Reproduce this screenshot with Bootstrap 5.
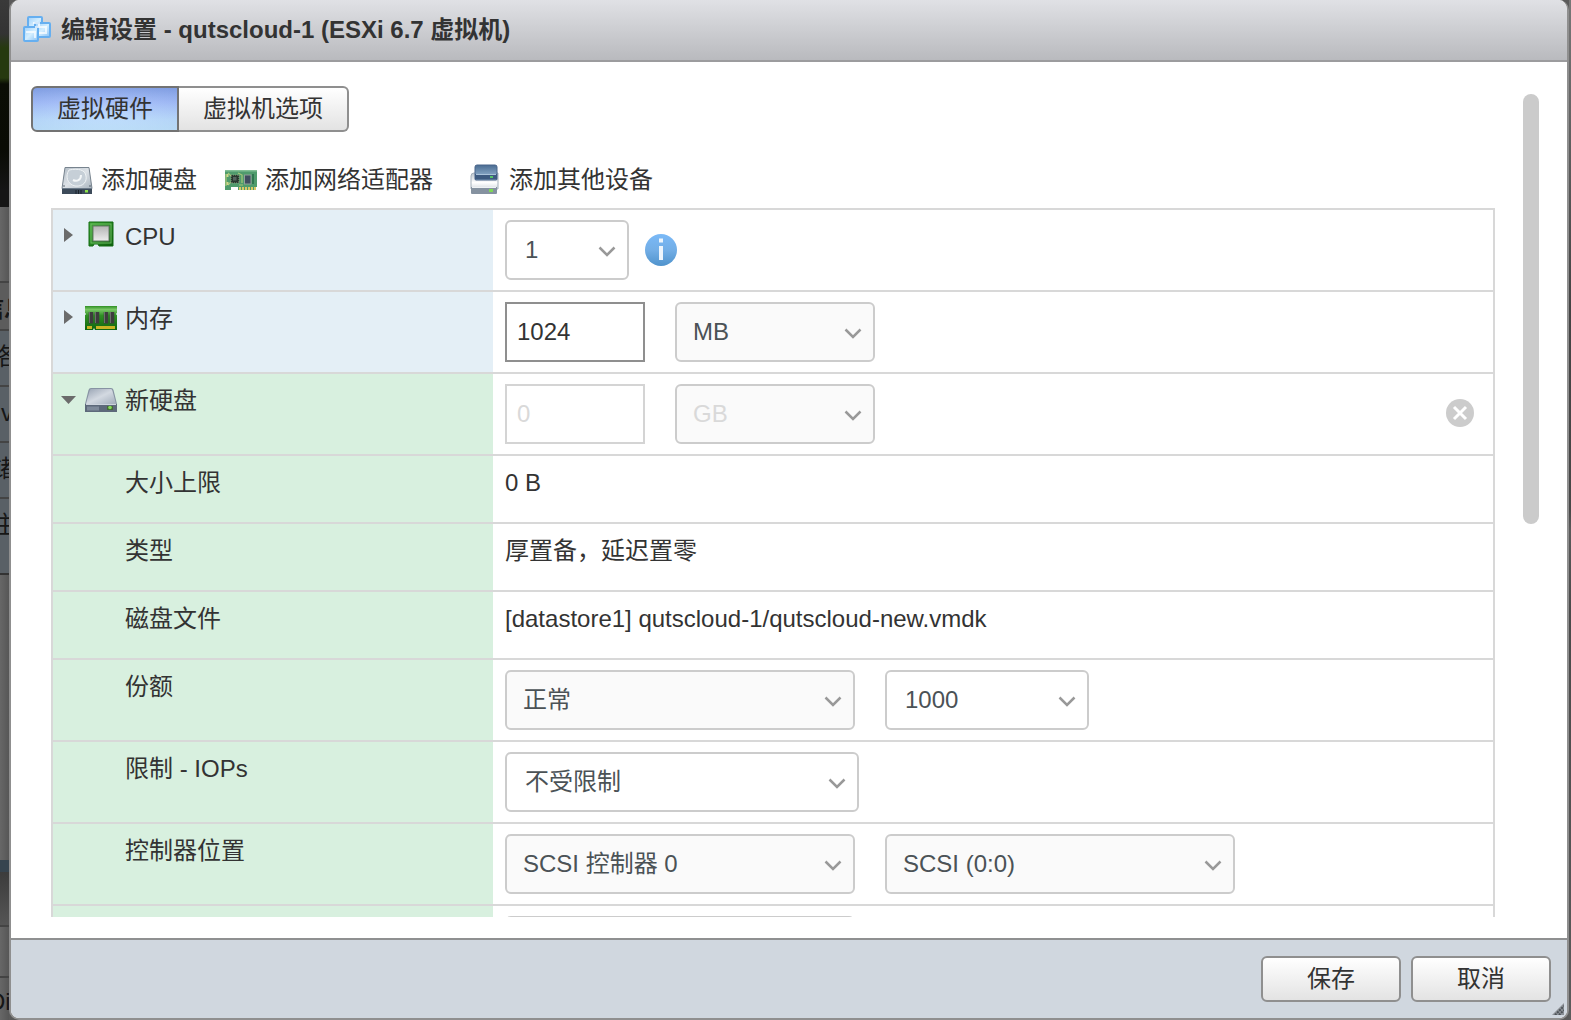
<!DOCTYPE html>
<html lang="zh-CN">
<head>
<meta charset="utf-8">
<meta name="viewport" content="width=device-width, initial-scale=1">
<title>编辑设置 - qutscloud-1 (ESXi 6.7 虚拟机)</title>
<link href="https://cdn.jsdelivr.net/npm/bootstrap@5.3.0/dist/css/bootstrap.min.css" rel="stylesheet">
<style>
  body { font-family: "Liberation Sans", "Noto Sans CJK SC", sans-serif; font-size: 24px; line-height: 32px; color: #333; background: #5a5a5a; }
  svg { display: block; flex: none; }

  /* dimmed page behind the dialog */
  .behind { flex: 0 0 9px; background: linear-gradient(90deg, rgba(0,0,0,0), rgba(0,0,0,.16)), #676767; color: #161616; }
  .behind-edge { flex: 0 0 2px; background: linear-gradient(#777, #444 30%, #484848 50%, #5a5a5a 52%, #4a4a4a 60%, #5c5c5c); }
  .behind-head { flex: 0 0 207px; background: linear-gradient(#3a3a3a 0, #333 34px, #26390f 48px, #26390f 78px, #0a0d05 84px, #090b04 150px, #151515 190px, #151515); }
  .behind-gap { flex: 0 0 74px; }
  .behind-cell { flex: 0 0 56px; padding-top: 10px; border-top: 2px solid #444; background: #596066; }
  .behind-title { flex-basis: 48px; background: #5c5c5c; }
  .behind-last { flex-basis: 78px; border-bottom: 2px solid #333; }
  .behind-blank { flex: 0 0 285px; }
  .behind-bar { flex: 0 0 65px; border-top: 12px solid #36444f; background: linear-gradient(#3c3c3c, #555); }
  .behind-foot { flex: 0 0 51px; padding-top: 8px; border-top: 2px solid #444; }

  .dialog { border: 2px solid #8f8f8f; border-top: 0; border-radius: 10px; background: #fff; }
  .dialog-head { gap: 8px; padding: 14px 10px; background: linear-gradient(#e0e1e5, #b9babe); border-bottom: 2px solid #9c9c9e; }
  .dialog-title { font-size: 24px; line-height: 32px; font-weight: 700; color: #333; }
  .dialog-main { gap: 28px; padding: 24px 28px 21px 20px; }
  .dialog-foot { gap: 10px; padding: 16px; background: #d0d7df; border-top: 2px solid #8f9091; }
  .grip { right: 3px; bottom: 3px; }

  .btn-gray { --bs-btn-color: #333; --bs-btn-hover-color: #333; --bs-btn-active-color: #333; height: 46px; padding: 5px 24px; font-size: 24px; line-height: 32px; border: 2px solid #8f8f8f; border-radius: 6px; background: linear-gradient(#fff, #e3e3e3); }
  .btn-wide { width: 140px; }
  .btn-gray.btn-on { margin-right: 1px; border-color: #737373; background: radial-gradient(ellipse at center, rgba(255,255,255,.16), rgba(0,0,60,.05)), linear-gradient(#86a5ea, #a0bcfb 35%, #b9dcff 75%, #c0e4ff); }
  .tool-row { gap: 28px; padding: 32px 0 12px 30px; }
  .tool-link { gap: 8px; color: #333; text-decoration: none; }

  .grid-box { margin-left: 20px; border: 2px solid #d8d8d8; border-bottom: 0; }
  .grid-line { min-height: 68px; border-bottom: 2px solid #d8d8d8; }
  .grid-name { flex: 0 0 440px; gap: 8px; padding: 10px 8px; background: #e4eff6; }
  .grid-name label, .grid-name .plain, .grid-value .plain { display: block; padding-top: 1px; color: #333; }
  .grid-name.sub { padding-left: 72px; }
  .grid-green .grid-name { background: #d8f0df; }
  .grid-value { padding: 10px 18px 10px 12px; }
  .grid-value.g16 { gap: 16px; }
  .grid-value.g30 { gap: 30px; }
  .fold { width: 16px; height: 30px; }
  .pic { width: 32px; height: 30px; }

  .field { height: 60px; padding: 0 10px; font-size: 24px; color: #333; border: 2px solid #8f8f8f; border-radius: 0; }
  .field:disabled { background: #fff; border-color: #d4d4d4; color: #d9d9d9; }
  .pick { height: 60px; padding: 0 40px 0 16px; font-size: 24px; line-height: 32px; color: #4b5256; border: 2px solid #ccc; border-radius: 6px; background-color: #fafafa;
    background-image: url("data:image/svg+xml,%3Csvg xmlns='http://www.w3.org/2000/svg' viewBox='0 0 18 14'%3E%3Cpath d='M1.500 4.500 9 12l7.500-7.500' fill='none' stroke='%23999' stroke-width='2.500'/%3E%3C/svg%3E");
    background-position: right 11px center; background-size: 18px 14px; }
  .pick:disabled { background-color: #fafafa; color: #d9d9d9; }
  .pick-open { padding-left: 18px; background-color: #fff; }
  .w-a { width: 124px; } .w-b { width: 140px; } .w-c { width: 200px; } .w-d { width: 350px; } .w-e { width: 204px; } .w-f { width: 354px; }

  .rail { flex: 0 0 16px; padding-top: 8px; }
  .thumb { background: #cbcbcb; }
</style>
</head>
<body>
<div class="d-flex vh-100 overflow-hidden">

  <div class="behind d-flex flex-column overflow-hidden text-nowrap" aria-hidden="true">
    <div class="behind-head"></div>
    <div class="behind-gap"></div>
    <div class="behind-cell behind-title fw-bold" style="text-indent:-20px">信息</div>
    <div class="behind-cell" style="text-indent:-10px">络</div>
    <div class="behind-cell" style="text-indent:1px">v</div>
    <div class="behind-cell" style="text-indent:-10px">储</div>
    <div class="behind-cell behind-last" style="text-indent:-10px">注</div>
    <div class="behind-blank"></div>
    <div class="behind-bar"></div>
    <div class="behind-foot"></div>
    <div class="behind-foot" style="text-indent:-12px">Di</div>
  </div>

  <section class="dialog position-relative d-flex flex-column flex-grow-1 overflow-hidden" role="dialog" aria-labelledby="dlgTitle">
    <header class="dialog-head d-flex align-items-center">
      <svg width="32" height="32" viewBox="0 0 32 32">
        <defs><linearGradient id="sq" x1="0" y1="0" x2="1" y2="1"><stop offset="0" stop-color="#9fd0fa"/><stop offset=".5" stop-color="#d4eeff"/><stop offset="1" stop-color="#86c0f5"/></linearGradient></defs>
        <g fill="url(#sq)" stroke="#66aff0" stroke-width="2">
          <rect x="7" y="3" width="14" height="14" rx="1"/>
          <rect x="14" y="9" width="15" height="14" rx="1"/>
          <rect x="3" y="13" width="14" height="14" rx="1"/>
        </g>
        <path d="M12 9h6v4h-4M17 13h8v6h-7M5 18h9v6" fill="none" stroke="#fff" stroke-width="2" opacity=".7"/>
      </svg>
      <h1 class="dialog-title mb-0" id="dlgTitle">编辑设置 - qutscloud-1 (ESXi 6.7 虚拟机)</h1>
    </header>

    <main class="dialog-main d-flex flex-grow-1 overflow-hidden">
      <div class="flex-grow-1 overflow-hidden">
        <div class="btn-group">
          <button type="button" class="btn btn-gray btn-on">虚拟硬件</button>
          <button type="button" class="btn btn-gray border-start-0">虚拟机选项</button>
        </div>

        <nav class="tool-row d-flex">
          <a href="#" class="tool-link d-flex align-items-center">
            <svg width="32" height="32" viewBox="0 0 32 32">
              <defs>
                <linearGradient id="plate" x1="0" y1="0" x2="1" y2="1"><stop offset="0" stop-color="#b2bcc6"/><stop offset=".5" stop-color="#dde2e7"/><stop offset="1" stop-color="#aab5bf"/></linearGradient>
              </defs>
              <path d="M4 3.500h24L31 24.500H1z" fill="url(#plate)" stroke="#77838e"/>
              <path d="M8 6c-4 6-2 14 6 16 9 1 12-5 11-10C24 6 18 4 8 6z" fill="#c6cfd7" stroke="#eff3f5"/>
              <path d="M12 16c4 2 8 0 8-5" fill="none" stroke="#f4f7f8" stroke-width="2"/>
              <path d="M1 24h30v6H1z" fill="#3d4b5a"/><path d="M1 24.500h30" stroke="#6b7988"/>
              <path d="M15 26v4M17.500 26v4M20 26v4" stroke="#1d242c"/>
              <rect x="24" y="26" width="3" height="2.500" fill="#8de24a"/>
              <circle cx="3" cy="22" r=".8" fill="#4b5763"/><circle cx="29" cy="22" r=".8" fill="#4b5763"/>
            </svg>添加硬盘</a>
          <a href="#" class="tool-link d-flex align-items-center me-2">
            <svg width="32" height="32" viewBox="0 0 32 32">
              <path d="M0 6h32v17H31v3H13v-3H6v3H0z" fill="#4f9b6c"/>
              <path d="M0 6h32v1.500H0z" fill="#82bf95"/><path d="M1 10v12M3 9l3 3M3 21l3-3M13 9l4 2v8M14 21h4" fill="none" stroke="#a6c878" stroke-width="1.200"/>
              <rect x="1.500" y="10" width="2" height="3" fill="#cfd68a"/><rect x="1.500" y="18" width="2" height="3" fill="#cfd68a"/>
              <rect x="6" y="11" width="8" height="8" fill="#28382f" stroke="#8c9a7b" stroke-dasharray="1 1"/><rect x="8" y="13" width="3.500" height="3.500" fill="#56645f"/>
              <rect x="19.500" y="11" width="6.500" height="9" fill="#3f4d5f" stroke="#8fa098"/>
              <path d="M28 10v10" stroke="#2f7550" stroke-width="2"/>
              <path d="M14 24.500h17" stroke="#d9c866" stroke-width="3" stroke-dasharray="2 1"/>
            </svg>添加网络适配器</a>
          <a href="#" class="tool-link d-flex align-items-center">
            <svg width="32" height="32" viewBox="0 0 32 32">
              <defs>
                <linearGradient id="devTop" x1="0" y1="0" x2="0" y2="1"><stop offset="0" stop-color="#4a6c92"/><stop offset="1" stop-color="#a3c1dc"/></linearGradient>
                <linearGradient id="devLow" x1="0" y1="0" x2="0" y2="1"><stop offset="0" stop-color="#b9c2cb"/><stop offset=".6" stop-color="#fff"/><stop offset="1" stop-color="#d5dbe1"/></linearGradient>
              </defs>
              <path d="M5 9h24v16H2V12q0-3 3-3z" fill="url(#devLow)" stroke="#a3afba"/>
              <path d="M2 23h26v6q0 1-1 1H3q-1 0-1-1z" fill="#8592a0"/><path d="M3 23.500h24" stroke="#eef2f5"/>
              <path d="M8 1h18q2 0 2 2v12q0 1-1 1H7q-1 0-1-1V3q0-2 2-2z" fill="url(#devTop)" stroke="#48648a"/>
              <path d="M6 10h22v5.500H6z" fill="#3d5a80"/><path d="M7 10.500h20" stroke="#a9c2da"/>
              <rect x="21" y="12" width="3" height="2" fill="#55c268"/><rect x="20" y="25" width="4" height="3" fill="#7ed957"/>
            </svg>添加其他设备</a>
        </nav>

        <div class="grid-box">
          <div class="grid-line d-flex">
            <div class="grid-name d-flex align-items-start">
              <svg class="fold" viewBox="0 0 16 30"><path d="M3 8l9 7-9 7z" fill="#6b6b6b"/></svg>
              <svg class="pic" viewBox="0 0 32 30">
                <defs>
                  <linearGradient id="cpuG" x1="0" y1="0" x2="1" y2="1"><stop offset="0" stop-color="#3fae35"/><stop offset="1" stop-color="#0b5c0b"/></linearGradient>
                  <linearGradient id="cpuC" x1="0" y1="0" x2="0" y2="1"><stop offset="0" stop-color="#b4b4b4"/><stop offset="1" stop-color="#ececec"/></linearGradient>
                </defs>
                <path d="M4 2h24v24H14l-1-2h-4l-1 2H4z" fill="url(#cpuG)" stroke="#126a12"/>
                <rect x="6" y="4" width="20" height="19" fill="none" stroke="#6dbb63"/>
                <rect x="8" y="6" width="16" height="15" fill="url(#cpuC)" stroke="#667a66"/>
              </svg>
              <label for="cpu">CPU</label>
            </div>
            <div class="grid-value g16 d-flex align-items-center flex-grow-1">
              <select class="form-select pick pick-open w-a" id="cpu"><option>1</option><option>2</option><option>4</option></select>
              <svg width="32" height="32" viewBox="0 0 32 32">
                <defs><linearGradient id="inf" x1="0" y1="0" x2="0" y2="1"><stop offset="0" stop-color="#7ab9f7"/><stop offset=".5" stop-color="#73aee6"/><stop offset="1" stop-color="#4f93cc"/></linearGradient></defs>
                <circle cx="16" cy="16" r="16" fill="url(#inf)"/><path d="M14 4.500h4v4h-4zM14 12h4v14h-4z" fill="#eef5fc"/>
              </svg>
            </div>
          </div>

          <div class="grid-line d-flex">
            <div class="grid-name d-flex align-items-start">
              <svg class="fold" viewBox="0 0 16 30"><path d="M3 8l9 7-9 7z" fill="#6b6b6b"/></svg>
              <svg class="pic" viewBox="0 0 32 30">
                <defs><linearGradient id="ramG" x1="0" y1="0" x2="0" y2="1"><stop offset="0" stop-color="#2f8f24"/><stop offset=".15" stop-color="#7ac766"/><stop offset=".4" stop-color="#2f8f24"/><stop offset="1" stop-color="#0f650f"/></linearGradient></defs>
                <path d="M0 4h32v7q-2 1 0 2v15H10l-1-2-1 2H0V13q2-1 0-2z" fill="url(#ramG)"/>
                <path d="M6 10v11.500M12 10v11.500M21 10v11.500M27 10v11.500" stroke="#3d3d3d" stroke-width="4.500"/>
                <path d="M4.500 10v11M10.500 10v11M19.500 10v11M25.500 10v11" stroke="#6d6d6d"/>
                <path d="M2 25.500h5M11 25.500h19" stroke="#c8b425" stroke-width="3"/>
              </svg>
              <label for="mem">内存</label>
            </div>
            <div class="grid-value g30 d-flex align-items-center flex-grow-1">
              <input class="form-control field w-b" id="mem" type="text" value="1024">
              <select class="form-select pick w-c" aria-label="内存单位"><option>MB</option><option>GB</option></select>
            </div>
          </div>

          <div class="grid-green">
            <div class="grid-line d-flex">
              <div class="grid-name d-flex align-items-start">
                <svg class="fold" viewBox="0 0 16 30"><path d="M0 12h15l-7.500 8z" fill="#6b6b6b"/></svg>
                <svg class="pic" viewBox="0 0 32 30">
                  <defs><linearGradient id="hd" x1="0" y1="0" x2="1" y2="1"><stop offset="0" stop-color="#98a3b3"/><stop offset=".5" stop-color="#d3d9e1"/><stop offset="1" stop-color="#a2adbb"/></linearGradient></defs>
                  <path d="M6 4h20q2 0 2.500 2L32 20v7q0 1-1 1H1q-1 0-1-1v-7L3.500 6Q4 4 6 4z" fill="#8793a3"/>
                  <path d="M6 5h20q1 0 1.500 2L31 20H1L4.500 7Q5 5 6 5z" fill="url(#hd)"/>
                  <path d="M0 20h32v8H0z" fill="#5d697a"/><path d="M1 20.500h30" stroke="#cdd4dd"/>
                  <path d="M2 24.500h12" stroke="#7e8a9a" stroke-width="4"/><path d="M22 22h6v4h-6z" fill="#456b36"/><circle cx="25" cy="23.500" r="1.800" fill="#86dc5c"/>
                </svg>
                <label for="disk">新硬盘</label>
              </div>
              <div class="grid-value g30 d-flex align-items-center flex-grow-1">
                <input class="form-control field w-b" id="disk" type="text" value="0" disabled>
                <select class="form-select pick w-c" aria-label="硬盘单位" disabled><option>GB</option></select>
                <button type="button" class="btn p-0 border-0 ms-auto" aria-label="移除">
                  <svg width="30" height="30" viewBox="0 0 30 30"><circle cx="15" cy="14" r="14" fill="#ccc"/><path d="M9 8l12 12M21 8L9 20" stroke="#fff" stroke-width="3"/></svg>
                </button>
              </div>
            </div>

            <div class="grid-line d-flex">
              <div class="grid-name sub"><span class="plain">大小上限</span></div>
              <div class="grid-value"><span class="plain">0 B</span></div>
            </div>
            <div class="grid-line d-flex">
              <div class="grid-name sub"><span class="plain">类型</span></div>
              <div class="grid-value"><span class="plain">厚置备，延迟置零</span></div>
            </div>
            <div class="grid-line d-flex">
              <div class="grid-name sub"><span class="plain">磁盘文件</span></div>
              <div class="grid-value"><span class="plain">[datastore1] qutscloud-1/qutscloud-new.vmdk</span></div>
            </div>

            <div class="grid-line d-flex">
              <div class="grid-name sub"><label for="share">份额</label></div>
              <div class="grid-value g30 d-flex align-items-center">
                <select class="form-select pick w-d" id="share"><option>正常</option><option>低</option><option>高</option></select>
                <select class="form-select pick pick-open w-e" aria-label="份额值"><option>1000</option></select>
              </div>
            </div>
            <div class="grid-line d-flex">
              <div class="grid-name sub"><label for="iops">限制 - IOPs</label></div>
              <div class="grid-value d-flex align-items-center">
                <select class="form-select pick pick-open w-f" id="iops"><option>不受限制</option></select>
              </div>
            </div>
            <div class="grid-line d-flex">
              <div class="grid-name sub"><label for="ctl">控制器位置</label></div>
              <div class="grid-value g30 d-flex align-items-center">
                <select class="form-select pick w-d" id="ctl"><option>SCSI 控制器 0</option></select>
                <select class="form-select pick w-d" aria-label="控制器端口"><option>SCSI (0:0)</option></select>
              </div>
            </div>
            <div class="grid-line d-flex">
              <div class="grid-name sub"></div>
              <div class="grid-value d-flex align-items-center">
                <select class="form-select pick w-d" aria-label="磁盘模式"><option></option></select>
              </div>
            </div>
          </div>
        </div>
      </div>

      <div class="rail"><div class="thumb rounded-pill" style="height:52.3%"></div></div>
    </main>

    <footer class="dialog-foot d-flex justify-content-end">
      <button type="button" class="btn btn-gray btn-wide">保存</button>
      <button type="button" class="btn btn-gray btn-wide">取消</button>
    </footer>
    <svg class="grip position-absolute" width="12" height="12" viewBox="0 0 12 12"><path d="M12 0v12H0z" fill="#8b9096"/><path d="M3 12l9-9M7 12l5-5" stroke="#4d5257" stroke-width="2" stroke-dasharray="2 1"/></svg>
  </section>

  <div class="behind-edge" aria-hidden="true"></div>
</div>
<script src="https://cdn.jsdelivr.net/npm/bootstrap@5.3.0/dist/js/bootstrap.bundle.min.js"></script>
</body>
</html>
